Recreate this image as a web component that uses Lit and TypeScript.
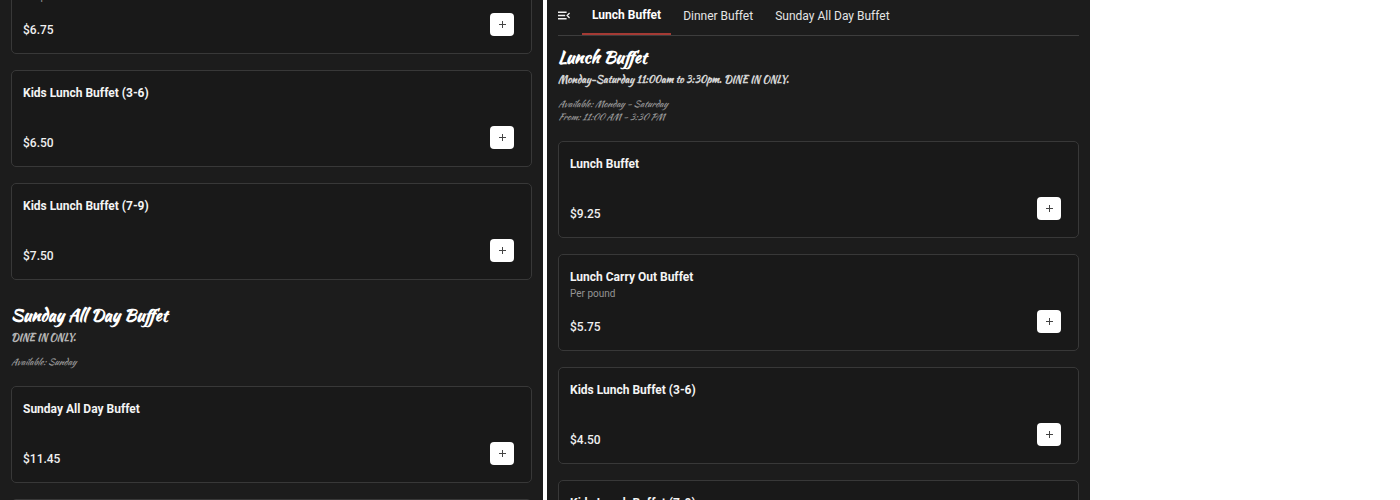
import { LitElement, html, css, nothing } from "lit";
import { customElement, property, state } from "lit/decorators.js";

interface Item {
  name: string;
  price: string;
  note?: string;
}

@customElement("menu-card")
class MenuCard extends LitElement {
  @property({ attribute: false }) item!: Item;

  static styles = css`
    :host { display: block; }
    .card {
      display: flex;
      justify-content: space-between;
      align-items: stretch;
      min-height: 97px;
      box-sizing: border-box;
      padding: 13px 17px 14px 11px;
      border: 1px solid #383838;
      border-radius: 5px;
      background: #191919;
    }
    .info { display: flex; flex-direction: column; }
    .name { margin: 0; font-size: 12px; line-height: 18px; font-weight: 700; color: #f4f4f4; }
    .note { margin: 0; font-size: 10px; line-height: 16px; color: #949494; }
    .price { margin: auto 0 0; font-size: 12px; line-height: 18px; font-weight: 500; color: #f0f0f0; }
    .add {
      align-self: flex-end;
      display: grid;
      place-items: center;
      flex: none;
      width: 24px;
      height: 23px;
      margin: 0 0 3px;
      padding: 0;
      border: 0;
      border-radius: 4px;
      background: #fff;
      cursor: pointer;
    }
    .add svg { display: block; width: 8px; height: 7px; }
  `;

  render() {
    const { name, price, note } = this.item;
    return html`
      <article class="card">
        <div class="info">
          <h3 class="name">${name}</h3>
          ${note ? html`<p class="note">${note}</p>` : nothing}
          <p class="price">${price}</p>
        </div>
        <button class="add" type="button" aria-label="Add ${name}">
          <svg viewBox="0 0 8 7" aria-hidden="true">
            <path d="M4.5 0v7M1 3.5h7" stroke="#444" stroke-width="1" fill="none" />
          </svg>
        </button>
      </article>
    `;
  }
}

@customElement("menu-section")
class MenuSection extends LitElement {
  @property() heading = "";
  @property() description = "";
  @property({ type: Boolean }) strong = false;
  @property({ attribute: false }) hours: string[] = [];
  @property({ attribute: false }) items: Item[] = [];

  static styles = css`
    :host { display: block; }
    .head {
      padding-bottom: 18px;
      font-family: "Kaushan Script", Lato, cursive;
    }
    .heading { margin: 0 0 2px; font-size: 17px; line-height: 26px; font-weight: 700; color: #fff; }
    .description { margin: 0 0 9px; font-size: 10px; line-height: 16px; font-weight: 700; color: #b4b4b4; }
    .description.strong { color: #d2d2d2; }
    .hours { margin: 0; font-size: 9px; line-height: 13px; font-style: italic; color: #979797; }
    .list { display: grid; gap: 16px; }
  `;

  render() {
    return html`
      ${this.heading
        ? html`<header class="head">
            <h2 class="heading">${this.heading}</h2>
            <p class="description ${this.strong ? "strong" : ""}">${this.description}</p>
            ${this.hours.map((line) => html`<p class="hours">${line}</p>`)}
          </header>`
        : nothing}
      <div class="list">
        ${this.items.map((item) => html`<menu-card .item=${item}></menu-card>`)}
      </div>
    `;
  }
}

@customElement("app-root")
class AppRoot extends LitElement {
  @state() private active = 0;

  private tabs = ["Lunch Buffet", "Dinner Buffet", "Sunday All Day Buffet"];

  private earlier: Item[] = [
    { name: "Lunch Carry Out Buffet", price: "$6.75", note: "Per pound" },
    { name: "Kids Lunch Buffet (3-6)", price: "$6.50" },
    { name: "Kids Lunch Buffet (7-9)", price: "$7.50" },
  ];

  private sunday: Item[] = [
    { name: "Sunday All Day Buffet", price: "$11.45" },
    { name: "Sunday Carry Out Buffet", price: "$6.75", note: "Per pound" },
  ];

  private lunch: Item[] = [
    { name: "Lunch Buffet", price: "$9.25" },
    { name: "Lunch Carry Out Buffet", price: "$5.75", note: "Per pound" },
    { name: "Kids Lunch Buffet (3-6)", price: "$4.50" },
    { name: "Kids Lunch Buffet (7-9)", price: "$5.50" },
  ];

  static styles = css`
    :host {
      display: block;
      height: 100vh;
      overflow: hidden;
      background: #fff;
      font-family: Roboto, sans-serif;
    }
    .panes {
      display: grid;
      grid-template-columns: 1fr 1fr;
      gap: 4px;
      max-width: 1090px;
      height: 100%;
    }
    .pane {
      display: flex;
      flex-direction: column;
      min-width: 0;
      padding: 0 11px;
      overflow: hidden;
      background: #1c1c1c;
    }
    .scrolled { display: grid; gap: 22px; margin-top: -43px; }
    .bar {
      display: flex;
      align-items: stretch;
      flex: none;
      height: 35px;
      margin-bottom: 8px;
      border-bottom: 1px solid #3d3d3d;
    }
    .toggle {
      display: flex;
      align-items: center;
      margin: 0 12px 4px 0;
      padding: 0;
      border: 0;
      background: none;
      cursor: pointer;
    }
    .toggle svg { display: block; width: 12px; height: 9px; }
    .tabs { display: flex; gap: 2px; }
    .tab {
      display: flex;
      align-items: center;
      padding: 0 10px 3px;
      border: 0;
      background: none;
      color: #e4e4e4;
      font: 400 12px/18px Roboto, sans-serif;
      white-space: nowrap;
      cursor: pointer;
    }
    .tab.active {
      border-bottom: 2px solid #a43a34;
      border-radius: 2px 2px 0 0;
      color: #fff;
      font-weight: 700;
    }
  `;

  render() {
    return html`
      <main class="panes">
        <section class="pane">
          <div class="scrolled">
            <menu-section .items=${this.earlier}></menu-section>
            <menu-section
              heading="Sunday All Day Buffet"
              description="DINE IN ONLY."
              .hours=${["Available: Sunday"]}
              .items=${this.sunday}
            ></menu-section>
          </div>
        </section>
        <section class="pane">
          <nav class="bar">
            <button class="toggle" type="button" aria-label="All sections">
              <svg viewBox="0 0 12 9" fill="none" stroke="#eee" stroke-width="1.4" aria-hidden="true">
                <path d="M0 1.2h8.6M0 4.5h7.2M0 7.8h8.6M11.6 2L9.2 4.5l2.4 2.5" />
              </svg>
            </button>
            <div class="tabs" role="tablist">
              ${this.tabs.map(
                (tab, i) => html`<button
                  class="tab ${i === this.active ? "active" : ""}"
                  type="button"
                  role="tab"
                  aria-selected=${i === this.active}
                  @click=${() => (this.active = i)}
                >${tab}</button>`
              )}
            </div>
          </nav>
          <menu-section
            heading="Lunch Buffet"
            strong
            description="Monday-Saturday 11:00am to 3:30pm. DINE IN ONLY."
            .hours=${["Available: Monday - Saturday", "From: 11:00 AM - 3:30 PM"]}
            .items=${this.lunch}
          ></menu-section>
        </section>
      </main>
    `;
  }
}
